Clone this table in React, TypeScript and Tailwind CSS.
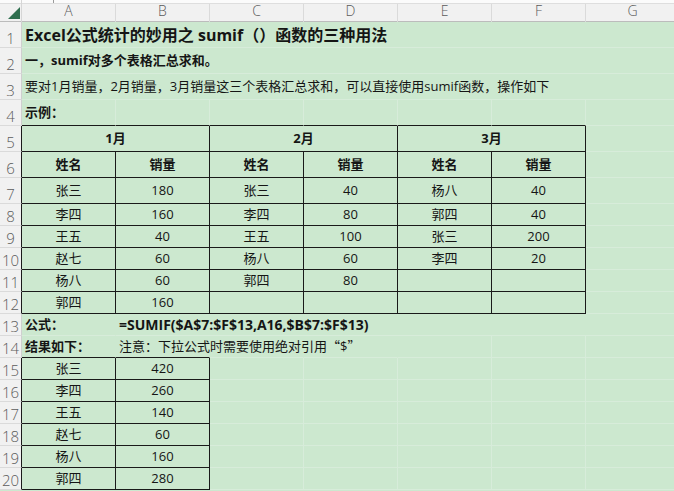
import React from "react";

type Cell = {
  text?: React.ReactNode;
  span?: number;
  bold?: boolean;
  center?: boolean;
  size?: string;
  r?: boolean; // black right edge
  b?: boolean; // black bottom edge
  noR?: boolean; // text runs over, hide gridline
};

const FONT = { fontFamily: '"Open Sans", "Noto Sans CJK SC", sans-serif' };
const CJK = { fontFamily: '"Noto Sans CJK SC", sans-serif' };
const COLS = ["A", "B", "C", "D", "E", "F", "G"];

const jan = [
  ["张三", "180"],
  ["李四", "160"],
  ["王五", "40"],
  ["赵七", "60"],
  ["杨八", "60"],
  ["郭四", "160"],
];
const feb = [
  ["张三", "40"],
  ["李四", "80"],
  ["王五", "100"],
  ["杨八", "60"],
  ["郭四", "80"],
  ["", ""],
];
const mar = [
  ["杨八", "40"],
  ["郭四", "40"],
  ["张三", "200"],
  ["李四", "20"],
  ["", ""],
  ["", ""],
];
const result = [
  ["张三", "420"],
  ["李四", "260"],
  ["王五", "140"],
  ["赵七", "60"],
  ["杨八", "160"],
  ["郭四", "280"],
];

const box = (text: string, bold = false): Cell => ({ text, center: true, bold, r: true, b: true });

const note = (
  <>
    注意：下拉公式时需要使用绝对引用
    <span style={CJK}>“</span>$<span style={CJK}>”</span>
  </>
);

const rows: Cell[][] = [
  [{ text: "Excel公式统计的妙用之 sumif（）函数的三种用法", span: 7, bold: true, size: "text-[16px]" }],
  [{ text: "一，sumif对多个表格汇总求和。", span: 7, bold: true }],
  [{ text: "要对1月销量，2月销量，3月销量这三个表格汇总求和，可以直接使用sumif函数，操作如下", span: 7 }],
  [{ text: "示例：", bold: true, b: true }, { b: true }, { b: true }, { b: true }, { b: true }, { b: true }, {}],
  [
    { text: "1月", span: 2, bold: true, center: true, r: true, b: true },
    { text: "2月", span: 2, bold: true, center: true, r: true, b: true },
    { text: "3月", span: 2, bold: true, center: true, r: true, b: true },
    {},
  ],
  [box("姓名", true), box("销量", true), box("姓名", true), box("销量", true), box("姓名", true), box("销量", true), {}],
  ...jan.map((j, i) => [
    box(j[0]),
    box(j[1]),
    box(feb[i][0]),
    box(feb[i][1]),
    box(mar[i][0]),
    box(mar[i][1]),
    {},
  ]),
  [
    { text: "公式：", bold: true, noR: true },
    { text: "=SUMIF($A$7:$F$13,A16,$B$7:$F$13)", bold: true, span: 6, size: "text-[14px]" },
  ],
  [
    { text: "结果如下：", bold: true, b: true, noR: true },
    { text: note, b: true, noR: true },
    { noR: true },
    { noR: true },
    {},
    {},
    {},
  ],
  ...result.map((r) => [box(r[0]), box(r[1]), {}, {}, {}, {}, {}]),
];

function rowHeight(n: number) {
  return n <= 7 ? "h-[26px]" : "h-[22px]";
}

function inTable(n: number) {
  return (n >= 5 && n <= 12) || n >= 15;
}

export default function App() {
  return (
    <div className="w-[674px] h-[491px] overflow-hidden bg-[#cce8cf] text-[#151515]" style={FONT}>
      {/* column headers */}
      <div className="relative grid h-[22px] grid-cols-[22px_repeat(7,94px)] border-b border-[#bcbcbc] bg-[#f1f1f1]">
        <div className="absolute left-0 top-0 h-[4px] w-full border-b border-[#dedede] bg-[#fbfbfb]">
          <div className="ml-[53px] h-full w-px bg-[#9a9a9a]" />
        </div>
        <div className="relative border-r border-[#d6d6d6]">
          <svg className="absolute left-[8px] top-[7px]" width="13" height="13" viewBox="0 0 13 13">
            <polygon points="12,0 12,12 0,12" fill="#2f6f4f" />
          </svg>
        </div>
        {COLS.map((c) => (
          <div
            key={c}
            className="flex items-end justify-center border-r border-[#dadada] pb-[1px] text-[14px] font-light text-[#5a5a5a]"
          >
            {c}
          </div>
        ))}
      </div>

      {rows.map((cells, i) => {
        const n = i + 1;
        return (
          <div key={n} className={`grid grid-cols-[22px_repeat(7,94px)] ${rowHeight(n)}`}>
            <div
              className={`flex items-end justify-center border-b border-[#dadada] bg-[#f1f1f1] pb-[1px] text-[15px] font-light leading-none text-[#5c5c5c] ${
                inTable(n) ? "border-r border-r-[#1a1a1a]" : "border-r border-r-[#cfcfcf]"
              }`}
            >
              {n}
            </div>
            {cells.map((c, j) => {
              const span = c.span === 7 ? "col-span-7" : c.span === 6 ? "col-span-6" : c.span === 2 ? "col-span-2" : "";
              const right = c.r
                ? "border-r border-r-[#1a1a1a]"
                : c.noR || c.span
                  ? "border-r border-r-transparent"
                  : "border-r border-r-[#d7ecda]";
              const bottom = c.b ? "border-b border-b-[#1a1a1a]" : "border-b border-b-[#d7ecda]";
              return (
                <div
                  key={j}
                  className={`relative flex items-center ${span} ${right} ${bottom} ${
                    c.center ? "justify-center" : "justify-start pl-[3px]"
                  }`}
                >
                  {c.text ? (
                    <span
                      className={`relative z-10 whitespace-nowrap ${c.size ?? "text-[13px]"} ${
                        c.bold ? "font-bold" : "font-normal"
                      }`}
                    >
                      {c.text}
                    </span>
                  ) : null}
                </div>
              );
            })}
          </div>
        );
      })}
    </div>
  );
}
